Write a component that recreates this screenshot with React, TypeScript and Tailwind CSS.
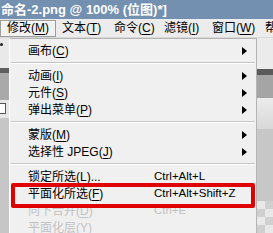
import React from 'react';

type Item =
  | { kind: 'sep' }
  | { kind: 'item'; label: string; key: string; tail?: string; sub?: boolean; shortcut?: string; disabled?: boolean };

const items: Item[] = [
  { kind: 'item', label: '画布', key: 'C', sub: true },
  { kind: 'sep' },
  { kind: 'item', label: '动画', key: 'I', sub: true },
  { kind: 'item', label: '元件', key: 'S', sub: true },
  { kind: 'item', label: '弹出菜单', key: 'P', sub: true },
  { kind: 'sep' },
  { kind: 'item', label: '蒙版', key: 'M', sub: true },
  { kind: 'item', label: '选择性 JPEG', key: 'J', sub: true },
  { kind: 'sep' },
  { kind: 'item', label: '锁定所选', key: 'L', tail: '...', shortcut: 'Ctrl+Alt+L' },
  { kind: 'item', label: '平面化所选', key: 'F', shortcut: 'Ctrl+Alt+Shift+Z' },
  { kind: 'item', label: '向下合并', key: 'D', shortcut: 'Ctrl+E', disabled: true },
  { kind: 'item', label: '平面化层', key: 'Y', disabled: true },
];

const menus = [
  { label: '修改', key: 'M', w: 'w-[56px]', active: true },
  { label: '文本', key: 'T', w: 'w-[52px]' },
  { label: '命令', key: 'C', w: 'w-[50px]' },
  { label: '滤镜', key: 'I', w: 'w-[48px]' },
  { label: '窗口', key: 'W', w: 'w-[53px]' },
  { label: '帮', key: '', w: 'w-[20px]' },
];

const Arrow = () => (
  <svg width="5" height="8" viewBox="0 0 5 8" className="shrink-0">
    <path d="M0 0L5 4L0 8Z" fill="#000" />
  </svg>
);

const MenuRow = ({ item }: { item: Extract<Item, { kind: 'item' }> }) => (
  <div
    className={`flex items-center h-[17px] pl-[18px] pr-[9px] whitespace-nowrap ${
      item.disabled ? 'text-[#c3c3c3]' : 'text-black'
    }`}
  >
    <span className="w-[126px] shrink-0">
      {item.label}(<span className="underline underline-offset-[2px]">{item.key}</span>){item.tail}
    </span>
    {item.shortcut && <span className="text-[11.5px]">{item.shortcut}</span>}
    {item.sub && (
      <span className="ml-auto">
        <Arrow />
      </span>
    )}
  </div>
);

export default function App() {
  return (
    <div className="relative w-[273px] h-[233px] overflow-hidden bg-[#c6c6c6] font-['Liberation_Sans','Noto_Sans_CJK_SC',sans-serif] text-[12px] leading-none">
      {/* title bar */}
      <div className="h-[19px] bg-[#7390b1] flex items-center pl-[1px] text-white font-bold text-[13px] whitespace-nowrap">
        命名-2.png @ 100% (位图)*]
      </div>

      {/* menu bar */}
      <div className="h-[19px] bg-[#ececec] flex items-center whitespace-nowrap border-b border-[#d8d8d8]">
        <span className="w-[9px] text-[#333] overflow-hidden flex justify-end">)</span>
        {menus.map(m => (
          <div
            key={m.label}
            className={`${m.w} h-[17px] shrink-0 flex items-center pl-[6px] ${
              m.active ? 'border border-[#9c9c9c] bg-[#f2f2f2] shadow-[inset_1px_1px_0_#fff]' : ''
            }`}
          >
            {m.label}
            {m.key && (
              <>
                (<span className="underline underline-offset-[2px]">{m.key}</span>)
              </>
            )}
          </div>
        ))}
      </div>

      {/* workspace behind the menu */}
      <div className="flex h-[195px]">
        <div className="w-[10px] flex flex-col">
          <div className="h-[30px] bg-[#e9e9e9] pt-[5px]">
            <div className="w-[3px] h-[3px] bg-[#222] rounded-full"></div>
          </div>
          <div className="h-[5px] bg-[#5e5e5e]"></div>
          <div className="h-[27px] bg-[#a9a9a9]"></div>
          <div className="h-[18px] bg-[#e6e6e6] pt-[3px]">
            <div className="w-[6px] h-[11px] bg-white border border-[#555] border-l-0"></div>
          </div>
          <div className="flex-1 bg-[#c6c6c6]"></div>
        </div>
        <div className="flex-1"></div>
        <div className="w-[16px] flex flex-col">
          <div className="h-[31px] bg-[#ebebeb]"></div>
          <div className="h-[6px] bg-[#5b5b5b]"></div>
          <div className="h-[23px] bg-[#a5a5a5]"></div>
          <div className="h-[32px] bg-gradient-to-b from-[#ececec] to-[#d8d8d8]"></div>
          <div className="h-[72px] bg-[#c7c7c7]"></div>
          <div className="flex-1 grid grid-cols-2 auto-rows-[8px]">
            <div className="bg-[#e9e9e9]"></div>
            <div className="bg-[#d0d0d0]"></div>
            <div className="bg-[#d0d0d0]"></div>
            <div className="bg-[#e9e9e9]"></div>
            <div className="bg-[#e9e9e9]"></div>
            <div className="bg-[#d0d0d0]"></div>
            <div className="bg-[#d0d0d0]"></div>
            <div className="bg-[#e9e9e9]"></div>
          </div>
        </div>
      </div>

      {/* dropdown menu */}
      <div className="absolute left-[9px] top-[38px] w-[248px] h-[200px] bg-[#f0f0f0] border border-[#b4b4b4] border-l-white pt-[3px]">
        {items.map((it, i) =>
          it.kind === 'sep' ? (
            <div key={i} className="h-[8px] flex flex-col justify-center px-[1px]">
              <div className="border-t border-[#c5c5c5]"></div>
              <div className="border-t border-white"></div>
            </div>
          ) : (
            <MenuRow key={i} item={it} />
          )
        )}
      </div>

      {/* red highlight */}
      <div className="absolute left-[11px] top-[183px] w-[244px] h-[25px] border-4 border-[#e00000] rounded-[2px]"></div>
    </div>
  );
}
